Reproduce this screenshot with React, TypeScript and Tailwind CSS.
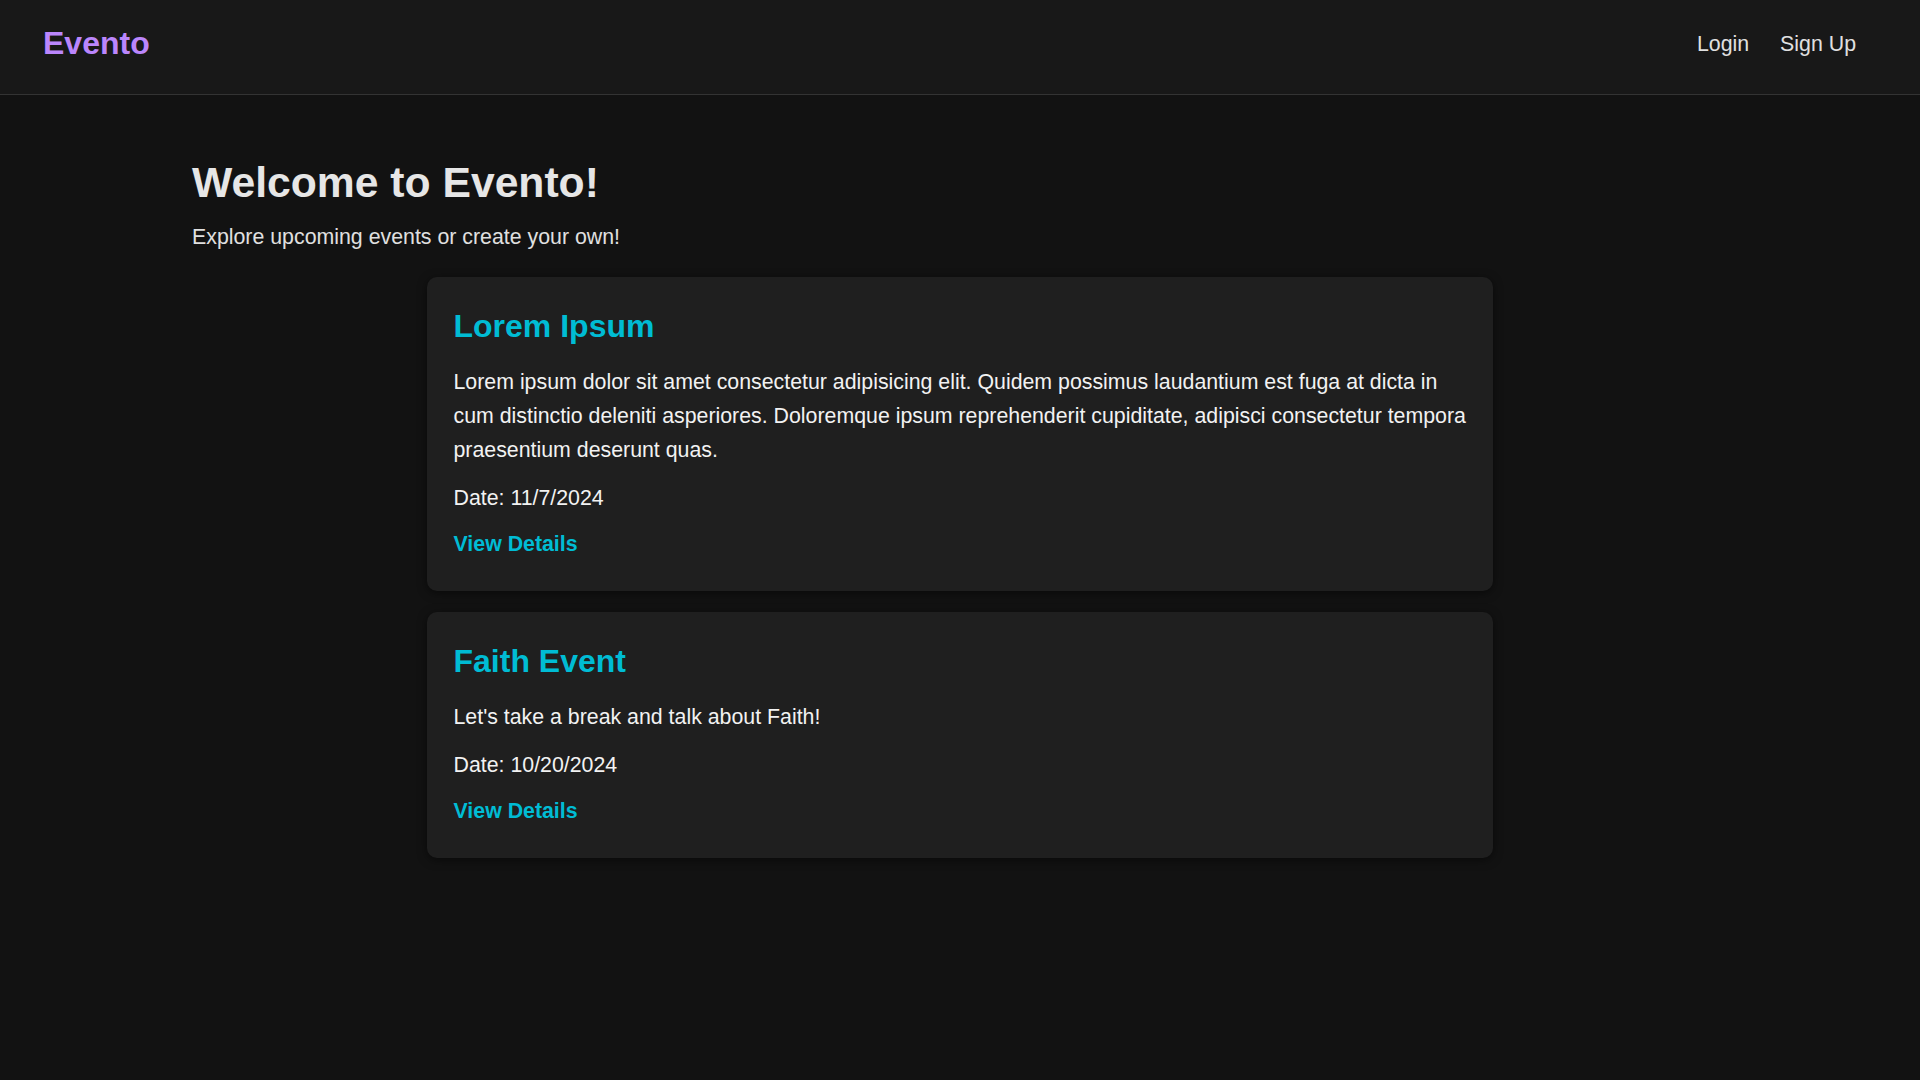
const EVENTS = [
  {
    id: 1,
    title: "Lorem Ipsum",
    description:
      "Lorem ipsum dolor sit amet consectetur adipisicing elit. Quidem possimus laudantium est fuga at dicta in cum distinctio deleniti asperiores. Doloremque ipsum reprehenderit cupiditate, adipisci consectetur tempora praesentium deserunt quas.",
    date: "11/7/2024",
  },
  {
    id: 2,
    title: "Faith Event",
    description: "Let's take a break and talk about Faith!",
    date: "10/20/2024",
  },
] as const;

function Header() {
  return (
    <header className="flex h-[95px] justify-between border-b border-[#333333] bg-[#181818] pl-[43px] pr-[64px]">
      <a href="#" className="mt-[25px] text-[32px] font-bold leading-[36px] text-[#bb86fc]">
        Evento
      </a>
      <nav className="mt-[32px] flex gap-[31px] text-[21.33px] leading-[24px] text-[#e0e0e0]">
        <a href="#">Login</a>
        <a href="#">Sign Up</a>
      </nav>
    </header>
  );
}

function EventCard({ title, description, date }: { title: string; description: string; date: string }) {
  return (
    <div className="rounded-[10px] bg-[#1f1f1f] px-[26.5px] pb-[29.5px] pt-[31px] shadow-[0_2px_10px_rgba(0,0,0,0.5)]">
      <h2 className="text-[32px] font-bold leading-[36px] text-[#00bcd4]">{title}</h2>
      <p className="mt-[21px] text-[21.33px] leading-[1.6] text-[#f2f2f2]">{description}</p>
      <p className="mt-[14px] text-[21.33px] leading-[1.6] text-[#f2f2f2]">Date: {date}</p>
      <a href="#" className="mt-[12px] block w-fit text-[21.33px] font-bold leading-[1.6] text-[#00bcd4]">
        View Details
      </a>
    </div>
  );
}

export default function App() {
  return (
    <div className="min-h-screen bg-[#121212] font-['Liberation_Sans',Arial,sans-serif]">
      <Header />
      <main className="mx-auto max-w-[1536px] pb-10 pt-[63px]">
        <h1 className="text-[42.67px] font-bold leading-[48px] text-[#e6e6e6]">Welcome to Evento!</h1>
        <p className="mt-[19px] text-[21.33px] leading-[24px] text-[#e0e0e0]">
          Explore upcoming events or create your own!
        </p>
        <div className="mx-auto mt-[27.5px] flex w-[1066px] flex-col gap-[21px]">
          {EVENTS.map((event) => (
            <EventCard key={event.id} title={event.title} description={event.description} date={event.date} />
          ))}
        </div>
      </main>
    </div>
  );
}
